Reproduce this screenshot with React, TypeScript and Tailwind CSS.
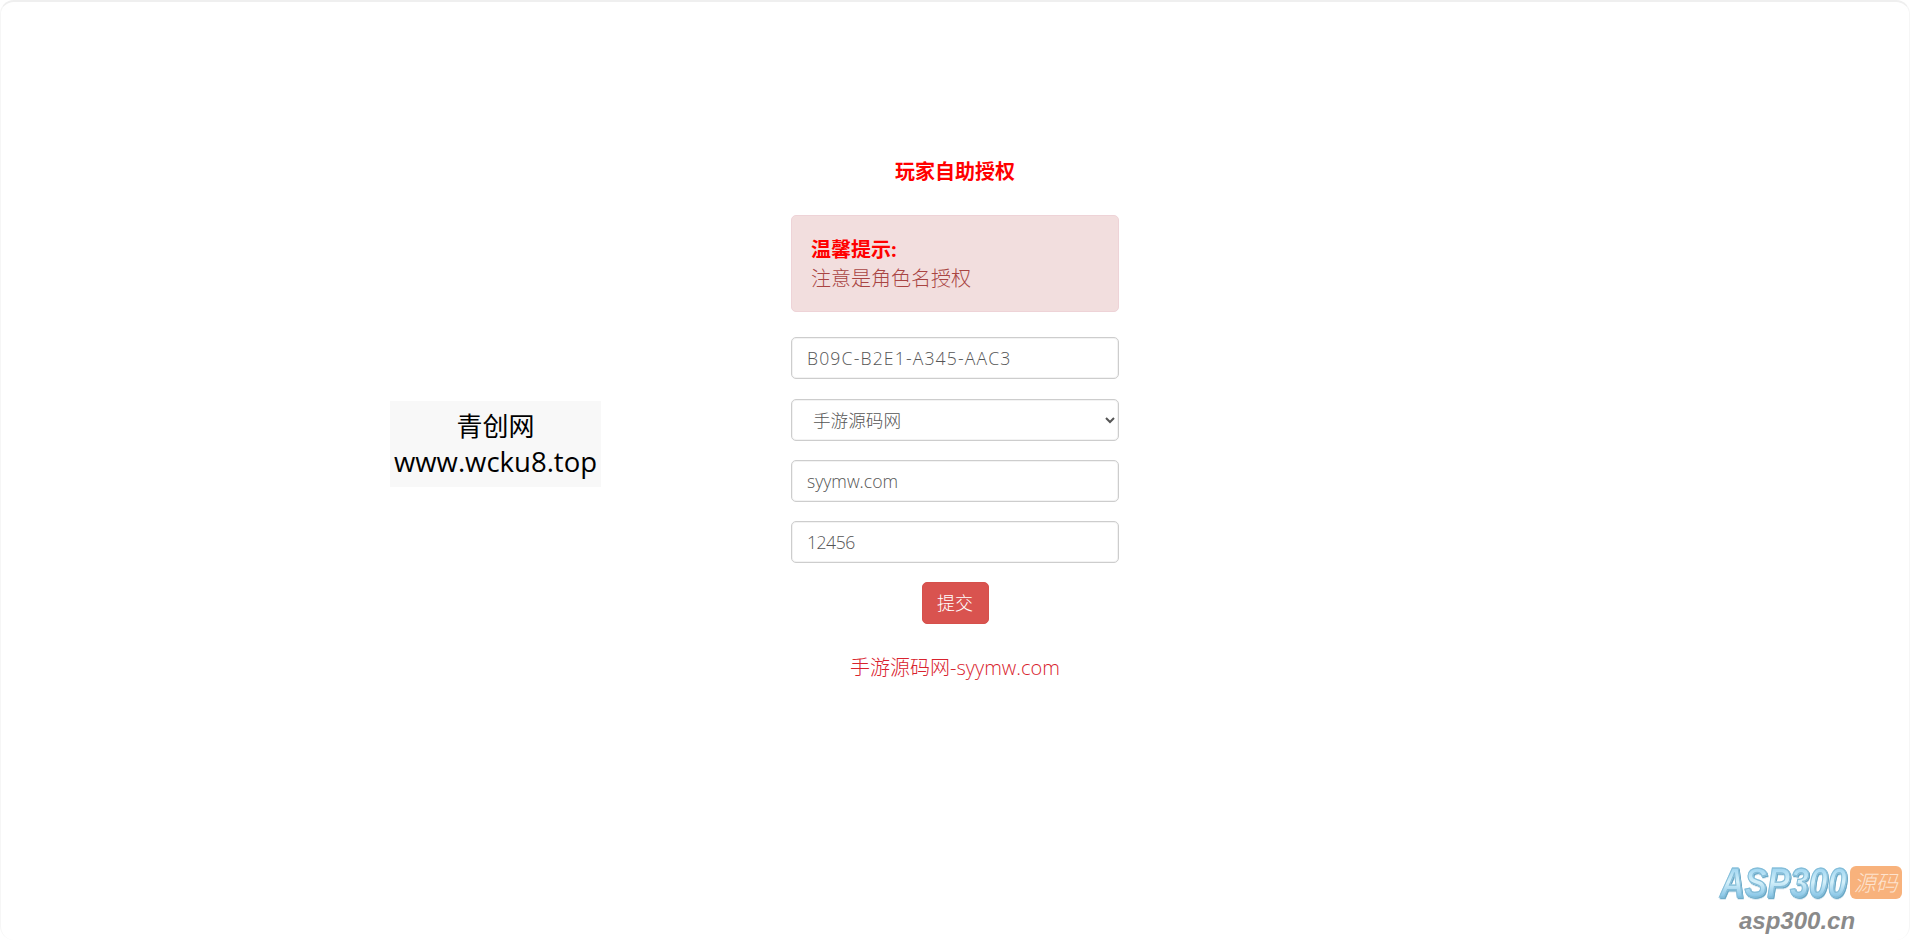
const fieldClass =
  "h-[42px] w-full rounded-[5px] border border-[#cdcdcd] bg-white px-[15px] text-[17.6px] font-light text-[#555] shadow-[inset_0_0_0_1px_#f3f3f3] outline-none";

export default function App() {
  return (
    <div className="relative h-[940px] overflow-hidden rounded-[14px] border-x border-t-2 border-x-[#f6f6f6] border-t-[#efefef] bg-white font-['Open_Sans','Noto_Sans_CJK_SC',sans-serif]">
      <div className="mx-auto flex w-[328px] flex-col pt-[155px]">
        <h1 className="text-center text-[20px] leading-[29px] font-bold text-[#ff0000]">玩家自助授权</h1>

        <div className="mt-[29px] h-[97px] rounded-[5px] border border-[#eed3d7] bg-[#f2dede] px-[19px] pt-[19px] text-[20px] leading-[29px]">
          <div className="font-bold text-[#ff0000]">温馨提示:</div>
          <div className="font-light text-[#a94442]">注意是角色名授权</div>
        </div>

        <input className={`mt-[25px] tracking-[1.15px] ${fieldClass}`} readOnly value="B09C-B2E1-A345-AAC3" />
        <select className={`mt-[20px] ${fieldClass} pl-[17px]`} defaultValue="手游源码网">
          <option>手游源码网</option>
        </select>
        <input className={`mt-[19px] ${fieldClass}`} readOnly value="syymw.com" />
        <input className={`mt-[19px] tracking-[-0.5px] ${fieldClass}`} readOnly value="12456" />

        <button className="mx-auto mt-[19px] h-[42px] w-[67px] rounded-[5px] border border-[#d6504b] bg-[#d9534f] text-[18px] font-light text-white">
          提交
        </button>

        <p className="mt-[29px] text-center text-[20px] leading-[29px] font-light text-[#d9232e]">手游源码网-syymw.com</p>
      </div>

      <div className="absolute top-[399px] left-[389px] w-[211px] bg-[#f8f8f8] py-[7px] text-center text-[27.5px] leading-[36px] text-black">
        <span className="text-[26px]">青创网</span>
        <br />
        www.wcku8.top
      </div>

      <div className="absolute top-[862px] right-[3px] flex w-[186px] flex-col">
        <div className="flex items-center gap-[3px]">
          <span className="inline-block scale-y-[1.25] bg-gradient-to-b from-[#7cc4ea] via-[#d4f0fa] to-[#5aaedb] bg-clip-text font-['Liberation_Sans',sans-serif] text-[34px] leading-[36px] font-bold text-transparent italic drop-shadow-[1px_1px_0_#6aa8c6] [-webkit-text-stroke:1px_#85bdd8]">
            ASP300
          </span>
          <span className="h-[33px] w-[52px] rounded-[6px] bg-[#f8b27c] text-center text-[22px] leading-[33px] font-light whitespace-nowrap text-[#fde3cf] italic">
            源码
          </span>
        </div>
        <span className="mt-[8px] ml-[19px] font-['Liberation_Sans',sans-serif] text-[24px] leading-[26px] font-bold text-[#8a8a8a] italic">
          asp300.cn
        </span>
      </div>
    </div>
  );
}
